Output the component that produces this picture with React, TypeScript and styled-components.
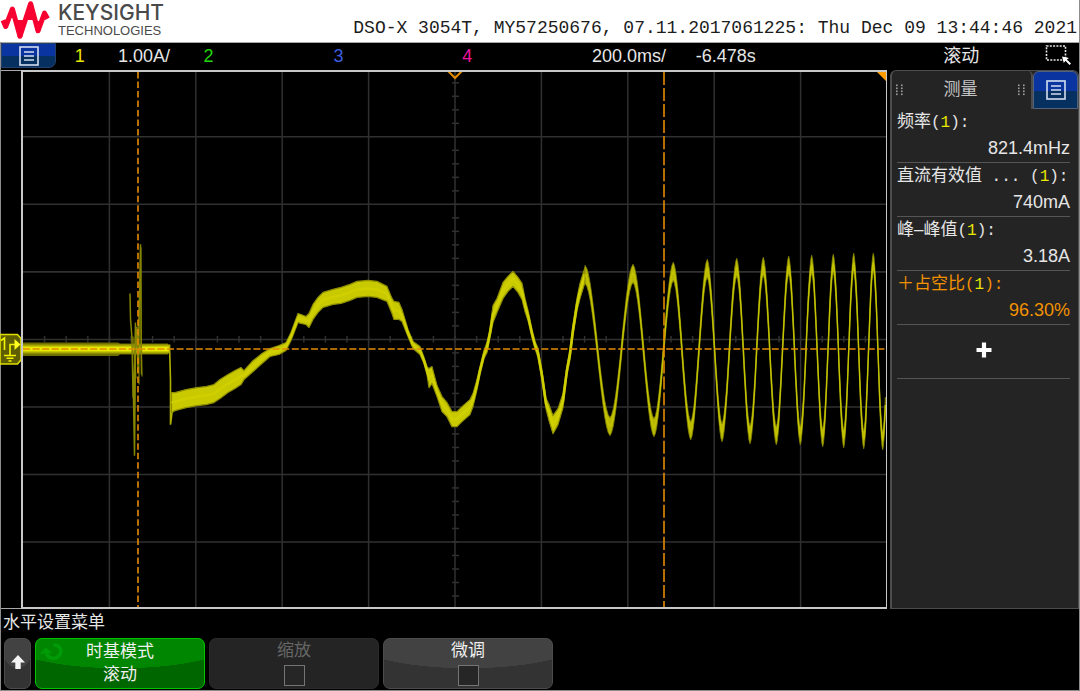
import React from "react";
import styled, { createGlobalStyle, css } from "styled-components";

const latin = `"Liberation Sans", "Noto Sans CJK SC", sans-serif`;
const mono = `"Liberation Mono", "Noto Sans CJK SC", monospace`;

const GlobalStyle = createGlobalStyle`
  * { box-sizing: border-box; }
  body { margin: 0; background: #000; color: #e6e6e6; font-family: ${latin}; }
  button { font: inherit; color: inherit; padding: 0; margin: 0; cursor: pointer; }
  h1, h2, dl, dd, dt { margin: 0; font-weight: 400; }
`;

const Screen = styled.div`
  min-height: 100vh;
  display: flex;
  flex-direction: column;
  border: 1px solid #8c8c8c;
  border-top: 0;
`;

const Header = styled.header`
  height: 42px;
  background: #fff;
  display: flex;
  justify-content: space-between;
  align-items: flex-end;
  padding-right: 2px;
  margin-left: -1px;
`;

const Brand = styled.div`
  display: flex;
  gap: 8px;
  height: 42px;
  color: #4a4a4a;
`;

const BrandText = styled.div`
  display: flex;
  flex-direction: column;
  padding-top: 1px;
`;

const BrandName = styled.span`
  font: 500 21px/23px Inter, sans-serif;
`;

const BrandSub = styled.span`
  font: 13px/14px ${latin};
`;

const Identity = styled.h1`
  font: 18px/28px ${mono};
  color: #1c1c1c;
  white-space: pre;
`;

const StatusBar = styled.div`
  height: 28px;
  display: grid;
  grid-template-columns: 74fr 129fr 130fr 129fr 130fr 104fr 248fr 102fr 34fr;
  align-items: start;
  border-top: 1px solid #a8a8a8;
  font-size: 18px;
  line-height: 26px;
`;

const tones = {
  yellow: "#e8e800",
  green: "#22d80a",
  blue: "#3c5ee0",
  magenta: "#f0109c",
  white: "#e6e6e6",
};

const Channel = styled.span<{ $tone: keyof typeof tones }>`
  color: ${(p) => tones[p.$tone]};
`;

const ChannelCell = styled.div`
  display: flex;
  gap: 33px;
`;

const blueFace = css`
  background: linear-gradient(#0a34a0 0 54%, #06305f 54%);
  border: 1px solid #24406c;
  display: flex;
  align-items: center;
  justify-content: center;
`;

const MenuButton = styled.button`
  ${blueFace}
  width: 55px;
  height: 25px;
  border-radius: 0 0 7px 0;
`;

const PanelMenuButton = styled.button`
  ${blueFace}
  width: 45px;
  height: 38px;
  border-radius: 6px 6px 0 0;
  border-color: #52617c;
`;

const Main = styled.main`
  flex: 1;
  display: flex;
  min-height: 538px;
`;

const Gutter = styled.div`
  width: 20px;
  border-top: 1px solid #a8a8a8;
  border-bottom: 1px solid #a8a8a8;
  padding-top: 262px;

  svg { display: block; margin-left: -1px; }
`;

const Plot = styled.section`
  flex: 1;
  min-width: 0;
  border: 2px solid #c8c8c8;
  border-width: 2px 1px 2px 2px;

  svg { display: block; width: 100%; height: 100%; }
`;

const Panel = styled.aside`
  width: 189px;
  margin-left: 3px;
  background: #242424;
  border: 1px solid #4c4c4c;
  border-width: 1px 1px 1px 2px;
  border-radius: 6px 6px 0 0;
`;

const PanelHead = styled.div`
  display: flex;
  height: 38px;
`;

const PanelTab = styled.div`
  flex: 1;
  display: flex;
  align-items: center;
  justify-content: space-between;
  padding: 0 6px 0 4px;
  border-right: 2px solid #4c4c4c;
  border-radius: 0 5px 0 0;
`;

const PanelTitle = styled.h2`
  font-size: 17px;
  line-height: 26px;
  color: #c4c4c4;
`;

const Measurements = styled.dl`
  padding: 0 8px 0 5px;
`;

const Measure = styled.div<{ $active?: boolean }>`
  height: 54px;
  border-bottom: 1px solid #555;
  color: ${(p) => (p.$active ? "#f39200" : "#e6e6e6")};
`;

const Label = styled.dt`
  font: 17px/26px ${latin};
  white-space: nowrap;
`;

const Source = styled.span`
  font: 16px/24px ${mono};
  white-space: pre;
`;

const SourceNo = styled.span`
  color: #e8e800;
`;

const Value = styled.dd`
  font-size: 18px;
  line-height: 26px;
  text-align: right;
`;

const AddButton = styled.button`
  width: 100%;
  height: 50px;
  background: none;
  border: 0;
  display: flex;
  align-items: center;
  justify-content: center;
`;

const Footer = styled.footer`
  padding: 1px 2px;
`;

const MenuTitle = styled.h2`
  font-size: 17px;
  line-height: 26px;
  margin-bottom: 2px;
`;

const Softkeys = styled.div`
  display: flex;
  gap: 4px;
  padding-left: 1px;
`;

const keyFace = {
  green: { glow: "#008600", base: "#006600", edge: "#00c400", text: "#f0f0f0" },
  grey: { glow: "#424242", base: "#333", edge: "#4c4c4c", text: "#f0f0f0" },
  dim: { glow: "#242424", base: "#242424", edge: "#2b2b2b", text: "#666" },
};

const keyStyle = css<{ $face: keyof typeof keyFace }>`
  height: 51px;
  border: 1px solid ${(p) => keyFace[p.$face].edge};
  border-radius: 7px;
  color: ${(p) => keyFace[p.$face].text};
  background: radial-gradient(
      ellipse 70% 60% at 50% 0,
      ${(p) => keyFace[p.$face].glow} 99%,
      transparent 100%
    )
    ${(p) => keyFace[p.$face].base};
  font-size: 17px;
  line-height: 24px;
`;

const BackKey = styled.button`
  ${keyStyle}
  width: 27px;
  display: flex;
  align-items: center;
  justify-content: center;
  padding-bottom: 4px;
`;

const ModeKey = styled.button`
  ${keyStyle}
  flex: 0 1 170px;
  position: relative;
  padding-bottom: 2px;

  svg { position: absolute; left: 4px; top: 4px; }
  span { display: block; line-height: 23px; }
`;

const ToggleKey = styled.label`
  ${keyStyle}
  flex: 0 1 170px;
  display: flex;
  flex-direction: column;
  align-items: center;
`;

const Tick = styled.input`
  appearance: none;
  margin: 2px 0 0;
  width: 21px;
  height: 21px;
  background: #262626;
  border: 1px solid #747474;
`;

const ListIcon = () => (
  <svg width="20" height="20" viewBox="0 0 20 20" fill="none" stroke="#d5def0" aria-hidden="true">
    <rect x="1" y="1" width="18" height="18" strokeWidth="1.6" />
    <path d="M5 6h10M5 10h10M5 14h10" strokeWidth="1.6" />
  </svg>
);

const Grip = () => (
  <svg width="7" height="12" viewBox="0 0 7 12" fill="#a0a0a0" aria-hidden="true">
    {[0, 5].map((x) =>
      [0, 3, 6, 9].map((y) => <rect key={`${x}-${y}`} x={x} y={y + 0.5} width="1.6" height="1.6" />)
    )}
  </svg>
);

const Logo = () => (
  <svg width="50" height="42" viewBox="0 0 50 42" aria-hidden="true">
    <path
      d="M3 20.300L5.700 26.500L12.400 9L20 36.300L30.600 3.700L38 30.800L44.500 13.200L47.500 18.700"
      fill="none"
      stroke="#f8002f"
      strokeWidth="5"
      strokeLinejoin="round"
    />
    <path
      d="M17.600 36.500H22.400L24 20H15.500Z M28.200 4H33L34.500 20H26Z M10 9H14.800L15.500 18H9.500Z M35.600 31H40.400L41 21H35Z"
      fill="#f8002f"
    />
  </svg>
);

/* [x, upper edge, lower edge] of the trace before the sweep speeds up. */
const rise: number[][] = [
  [171.5, 392, 412], [175, 392, 410], [186, 389, 407], [197, 387, 405], [206, 386, 404], [214, 384, 402],
  [220, 379, 398], [228, 374, 392], [235, 370, 388], [241, 367, 384], [244, 370, 379], [252, 361, 372],
  [262, 353, 363], [270, 348, 356], [279, 345, 354], [286, 342, 350], [291, 332, 340], [298, 313, 322],
  [301, 314, 323], [306, 316, 324], [309, 313, 327], [313, 304, 319], [318, 297, 312], [323, 292, 307],
  [333, 289, 304], [341, 287, 303], [350, 284, 300], [357, 281, 297], [368, 280, 296], [377, 281, 297],
  [387, 286, 301], [392, 298, 313], [394, 301, 319], [399, 302, 319], [402, 309, 321], [408, 329, 336],
  [413, 341, 348], [420, 346, 354], [424, 357, 363], [427, 366, 374], [429, 368, 387], [432, 366, 383],
  [437, 385, 396], [442, 396, 411], [447, 402, 416], [452, 411, 426], [457, 411, 426], [462, 406, 421],
  [470, 399, 414], [473, 393, 406], [477, 379, 389], [480, 366, 374], [484, 350, 358], [487, 342, 352],
  [490, 328, 337], [493, 305, 322], [497, 298, 312], [503, 282, 298], [508, 276, 291], [513, 271, 286],
  [518, 277, 292], [522, 283, 299], [525, 298, 311], [528, 310, 320], [532, 329, 337], [535, 341, 348],
  [538, 348, 357], [542, 370, 380], [546, 398, 408], [549, 404, 420], [553, 415, 433], [558, 408, 424],
  [563, 393, 407], [567, 365, 374], [570, 348, 359], [573, 324, 335], [577, 298, 310], [580, 283, 298],
  [585, 267, 282],
];

/* Turning points of the chirp, alternating peak and trough. */
const turns: number[][] = [
  [585, 274], [610, 426], [633, 273], [654, 427], [673.3, 271], [690.7, 430], [707.3, 268], [722, 432],
  [736.7, 267], [750, 434], [763.3, 266], [776.3, 435], [788.7, 265], [800.3, 435], [811.7, 264],
  [822.7, 437], [833.3, 263], [843.7, 438], [853.7, 262], [863.7, 439], [873.3, 262], [882.7, 440],
  [892, 262],
];

function chirp() {
  const out: number[][] = [];
  for (let i = 0; i < turns.length - 1; i++) {
    const [x0, y0] = turns[i];
    const [x1, y1] = turns[i + 1];
    const steps = 14;
    for (let k = 0; k < steps; k++) {
      const t = k / steps;
      const blend = 0.88 * (0.5 - 0.5 * Math.cos(Math.PI * t)) + 0.12 * t;
      const x = x0 + (x1 - x0) * t;
      if (x > 886) break;
      const turn = Math.abs(Math.cos(Math.PI * t));
      out.push([x, y0 + (y1 - y0) * blend, 7 + 2 * turn * turn]);
    }
  }
  return out;
}

const fast = chirp();
const line = (pts: number[][]) => pts.map(([x, y]) => `${x.toFixed(1)} ${y.toFixed(1)}`).join("L");
const band = (top: number[][], bottom: number[][]) => `M${line(top)}L${line([...bottom].reverse())}Z`;
const riseBand = band(rise.map((p) => [p[0], p[1]]), rise.map((p) => [p[0], p[2]]));
const riseCore = `M${line(rise.map((p) => [p[0], (p[1] + p[2]) / 2]))}`;
const fastBand = band(fast.map((p) => [p[0], p[1] - p[2]]), fast.map((p) => [p[0], p[1] + p[2]]));
const fastCore = `M${line(fast)}`;

const columns = Array.from({ length: 9 }, (_, i) => 109.4 + i * 86.4);
const rows = Array.from({ length: 7 }, (_, i) => 136.7 + i * 67.4);
const ticksX = Array.from({ length: 39 }, (_, i) => 23 + (i + 1) * 21.6);
const ticksY = Array.from({ length: 39 }, (_, i) => 69.3 + (i + 1) * 13.48);

const Waveform = () => (
  <svg viewBox="23 72 863 534" preserveAspectRatio="none" role="img" aria-label="Channel 1 waveform">
    <g stroke="#303030" strokeWidth="1.5">
      {columns.map((x) => <path key={x} d={`M${x} 72V606`} />)}
      {rows.map((y) => <path key={y} d={`M23 ${y}H886`} />)}
      {ticksX.map((x) => <path key={x} d={`M${x} 335.500V342`} />)}
      {ticksY.map((y) => <path key={y} d={`M452 ${y}H459`} />)}
    </g>
    <path d="M23 342H118L120 343H168V354H120L118 355.500H23Z" fill="#6f6f00" />
    <path d="M23 344H169V353H23Z" fill="#a8a800" />
    <path d="M23 348.500H170" stroke="#e8e800" strokeWidth="5" />
    <g fill="none" stroke="#858500" strokeWidth="1.5">
      <path d="M130 293L130.500 318L132 338L133 396L134.500 402M135.500 322L133.500 400L134.500 455L135.500 352L137 326L138 372L140.500 244L141.500 374" />
      <path d="M133 336L136 378M139 300V384M141 247V345L142 376" opacity="0.7" />
    </g>
    <path d="M169.500 344L170.500 380V424L172.500 408" fill="none" stroke="#b0b000" strokeWidth="1.6" />
    <path d={riseBand} fill="#c9c900" stroke="#8f8f00" strokeWidth="1.2" strokeLinejoin="round" />
    <path d={riseCore} fill="none" stroke="#d0d000" strokeWidth="2.5" />
    <path d={fastBand} fill="#b8b800" stroke="#858500" strokeWidth="0.8" strokeLinejoin="round" />
    <path d={fastCore} fill="none" stroke="#c4c400" strokeWidth="1.3" />
    <g stroke="#e58b00" fill="none" strokeWidth="1.6">
      <path d="M138 72V606" strokeDasharray="6.5 3" />
      <path d="M664 72V606" strokeDasharray="13 3" />
      <path d="M23 348.500H886" strokeDasharray="7 2.600" strokeWidth="1.4" />
      <path d="M448 71L455 78L462 71" strokeWidth="2" />
    </g>
    <path d="M877 72H886V81Z" fill="#ff9d00" />
  </svg>
);

const measures = [
  { name: "频率", tail: "", value: "821.4mHz" },
  { name: "直流有效值", tail: " ... ", value: "740mA" },
  { name: "峰–峰值", tail: "", value: "3.18A" },
  { name: "＋占空比", tail: "", value: "96.30%", active: true },
];

export default function App() {
  return (
    <>
      <GlobalStyle />
      <Screen>
        <Header>
          <Brand>
            <Logo />
            <BrandText>
              <BrandName>KEYSIGHT</BrandName>
              <BrandSub>TECHNOLOGIES</BrandSub>
            </BrandText>
          </Brand>
          <Identity>DSO-X 3054T, MY57250676, 07.11.2017061225: Thu Dec 09 13:44:46 2021</Identity>
        </Header>

        <StatusBar>
          <MenuButton aria-label="Main menu"><ListIcon /></MenuButton>
          <ChannelCell>
            <Channel $tone="yellow">1</Channel>
            <Channel $tone="white">1.00A/</Channel>
          </ChannelCell>
          <Channel $tone="green">2</Channel>
          <Channel $tone="blue">3</Channel>
          <Channel $tone="magenta">4</Channel>
          <span>200.0ms/</span>
          <span>-6.478s</span>
          <span>滚动</span>
          <svg width="27" height="24" viewBox="0 0 27 24" aria-hidden="true">
            <path d="M1.500 3H20.500V17H1.500Z" fill="none" stroke="#e6e6e6" strokeWidth="1.6" strokeDasharray="2 1.300" />
            <path d="M17 13.500L24 15L21.800 16.500L26 20.500L24.500 22L20.500 17.800L18.800 20Z" fill="#fff" />
          </svg>
        </StatusBar>

        <Main>
          <Gutter>
            <svg width="22" height="32" viewBox="0 0 22 32" aria-hidden="true">
              <path d="M0 1.500H17.500L21 5.500V27L17.500 31H0Z" fill="#5e5e00" stroke="#dede00" strokeWidth="1.6" />
              <g stroke="#f4f400" strokeWidth="1.6" fill="none">
                <path d="M1 7.500L4.500 5V17" />
                <path d="M10 22V11.500H15" />
                <path d="M4 22.500H16M6.500 25.200H13.500M8.500 28H11.500" />
              </g>
              <path d="M14.500 6L20.500 11.500L14.500 17Z" fill="#ffff20" />
            </svg>
          </Gutter>
          <Plot><Waveform /></Plot>
          <Panel>
            <PanelHead>
              <PanelTab>
                <Grip />
                <PanelTitle>测量</PanelTitle>
                <Grip />
              </PanelTab>
              <PanelMenuButton aria-label="Measurement menu"><ListIcon /></PanelMenuButton>
            </PanelHead>
            <Measurements>
              {measures.map((m) => (
                <Measure key={m.name} $active={m.active}>
                  <Label>
                    {m.name}
                    <Source>{m.tail}(<SourceNo>1</SourceNo>):</Source>
                  </Label>
                  <Value>{m.value}</Value>
                </Measure>
              ))}
              <Measure as="div">
                <AddButton aria-label="Add measurement">
                  <svg width="16" height="16" viewBox="0 0 16 16" aria-hidden="true">
                    <path d="M8 0.500V15.500M0.500 8H15.500" stroke="#fff" strokeWidth="4.200" />
                  </svg>
                </AddButton>
              </Measure>
            </Measurements>
          </Panel>
        </Main>

        <Footer>
          <MenuTitle>水平设置菜单</MenuTitle>
          <Softkeys>
            <BackKey $face="grey" aria-label="Back">
              <svg width="14" height="14" viewBox="0 0 14 14" aria-hidden="true">
                <path d="M7 0L14 7.500H9.700V14H4.300V7.500H0Z" fill="#f4f4f4" />
              </svg>
            </BackKey>
            <ModeKey $face="green">
              <svg width="24" height="20" viewBox="0 0 24 20" aria-hidden="true">
                <path d="M13.500 2.200C21 1.500 23 9 18.500 13.300C14.500 17 8 15.500 6.500 10.500" fill="none" stroke="#009c08" strokeWidth="3.400" />
                <path d="M0 11L5.500 4.500L12.500 9.500Z" fill="#009c08" />
              </svg>
              <span>时基模式</span>
              <span>滚动</span>
            </ModeKey>
            <ToggleKey $face="dim">
              缩放
              <Tick type="checkbox" disabled />
            </ToggleKey>
            <ToggleKey $face="grey">
              微调
              <Tick type="checkbox" />
            </ToggleKey>
          </Softkeys>
        </Footer>
      </Screen>
    </>
  );
}
